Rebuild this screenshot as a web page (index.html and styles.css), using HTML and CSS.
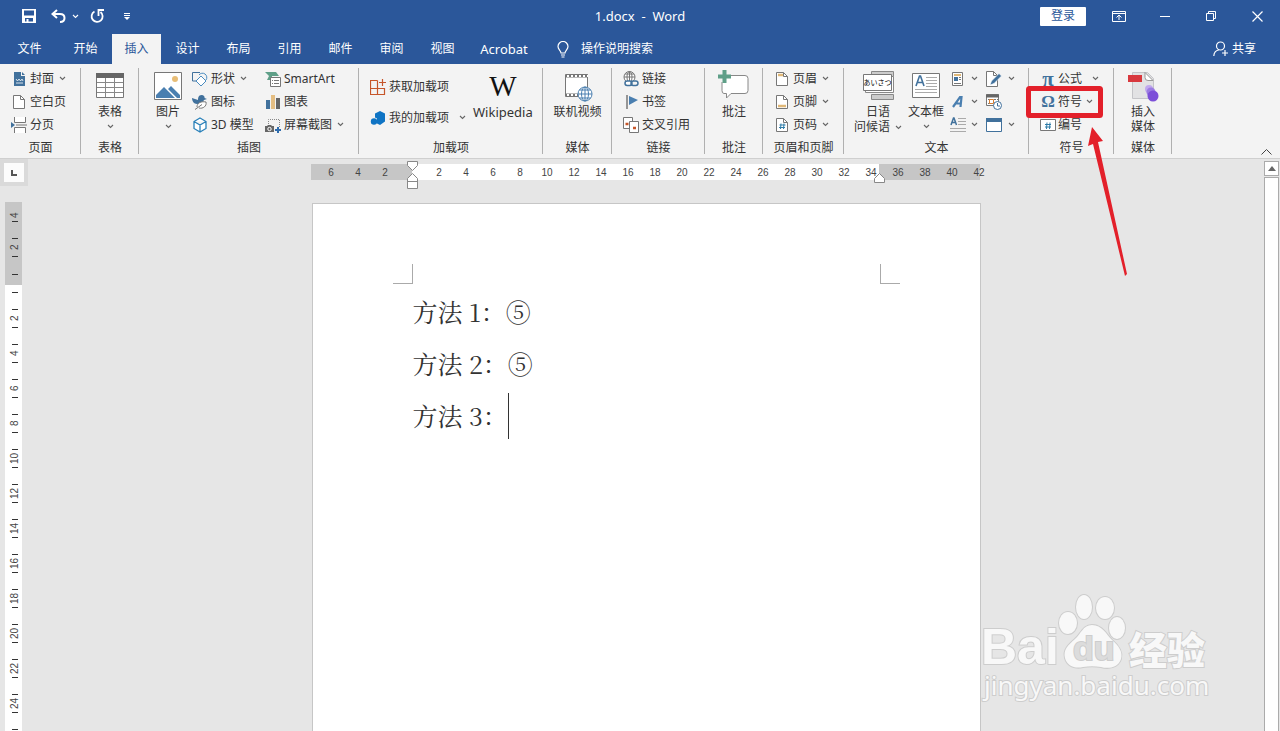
FILE: index.html
```html
<!DOCTYPE html>
<html lang="zh-CN">
<head>
    <meta charset="UTF-8">
    <title>1.docx - Word</title>
    <link rel="stylesheet" href="styles.css">
</head>
<body>
<svg class="sprite" aria-hidden="true">
    <symbol id="chev" viewBox="0 0 7 5"><path d="M1 1l2.5 2.5L6 1" fill="none" stroke="currentColor" stroke-width="1.1"/></symbol>
    <symbol id="sheet" viewBox="0 0 16 16"><path d="M2.500 1.500h7l4 4v9h-11z" fill="#fff" stroke="#777"/><path d="M9.500 1.500v4h4" fill="none" stroke="#777"/></symbol>
</svg>

<header class="titlebar">
    <div class="top-row">
        <div class="quick">
            <button class="q-save" aria-label="保存"><svg width="14" height="14" viewBox="0 0 14 14"><path d="M0 0h14v14H0zM2 1.500v5h10v-5zM3 9v3.500h1.500V10h2v2.500H11V9z" fill="#fff" fill-rule="evenodd"/></svg></button>
            <button class="q-undo" aria-label="撤销"><svg width="15" height="14" viewBox="0 0 15 14"><path d="M6 1L1.500 5 6 9M2 5h7c3 0 4.500 1.500 4.500 4S12 13 9 13" fill="none" stroke="#fff" stroke-width="2"/></svg></button>
            <button class="q-drop" aria-label="撤销列表"><svg width="7" height="5"><use href="#chev"/></svg></button>
            <button class="q-redo" aria-label="重复"><svg width="15" height="15" viewBox="0 0 15 15"><path d="M4.500 2.500A5.500 5.500 0 1 0 10.500 3" fill="none" stroke="#fff" stroke-width="1.800"/><path d="M14 1H8.500v6" fill="none" stroke="#fff" stroke-width="1.800"/></svg></button>
            <button class="q-more" aria-label="自定义"><svg width="6" height="7" viewBox="0 0 6 7"><path d="M0 .5h6M0 2.500h6" stroke="#fff"/><path d="M0 4h6L3 7z" fill="#fff"/></svg></button>
        </div>
        <h1 class="doc-title">1.docx  -  Word</h1>
        <div class="window">
            <button class="login">登录</button>
            <button class="win-btn" aria-label="功能区显示选项"><svg width="14" height="11" viewBox="0 0 14 11"><path d="M.5.500h13v10H.5zM.5 2.500h13M7 9V4M4.500 6.500L7 4l2.500 2.500" fill="none" stroke="#fff"/></svg></button>
            <button class="win-btn" aria-label="最小化"><svg width="10" height="10"><path d="M0 5.500h10" stroke="#fff"/></svg></button>
            <button class="win-btn" aria-label="还原"><svg width="10" height="10" viewBox="0 0 10 10"><path d="M.5 2.500h7v7h-7zM2.500 2.500v-2h7v7h-2" fill="none" stroke="#fff"/></svg></button>
            <button class="win-btn" aria-label="关闭"><svg width="11" height="11" viewBox="0 0 11 11"><path d="M.5.500l10 10M10.500.500l-10 10" stroke="#fff" stroke-width="1.200"/></svg></button>
        </div>
    </div>
    <nav class="tabs">
        <button class="tab file">文件</button>
        <button class="tab">开始</button>
        <button class="tab active">插入</button>
        <button class="tab">设计</button>
        <button class="tab">布局</button>
        <button class="tab">引用</button>
        <button class="tab">邮件</button>
        <button class="tab">审阅</button>
        <button class="tab">视图</button>
        <button class="tab acrobat">Acrobat</button>
        <label class="tell-me">
            <svg width="12" height="17" viewBox="0 0 12 17"><path d="M4 12C4 10 1 8.500 1 5.500a5 5 0 0 1 10 0C11 8.500 8 10 8 12zM4 14h4M4.500 16h3" fill="none" stroke="#fff" stroke-width="1.200"/></svg>
            <input type="text" aria-label="操作说明搜索" placeholder="操作说明搜索">
        </label>
        <button class="share">
            <svg width="16" height="16" viewBox="0 0 16 16"><circle cx="7.500" cy="5" r="4" fill="none" stroke="#fff" stroke-width="1.200"/><path d="M.8 15c.2-3.500 2-5.500 5-6M12 9v6M9 12h6" fill="none" stroke="#fff" stroke-width="1.200"/></svg>
            共享
        </button>
    </nav>
</header>

<section class="ribbon">
    <div class="group g-page">
        <div class="tools">
            <div class="col">
                <button class="small"><svg width="16" height="16" viewBox="0 0 16 16"><path d="M3 1h7v4h4v10H3z" fill="#41719c"/><path d="M11 1l3 3h-3z" fill="#41719c"/><path d="M5 8l1.500 2L8 8l1.500 2L11 8l1 2M5 12h7" fill="none" stroke="#fff" stroke-width=".8"/></svg>封面<svg class="chev"><use href="#chev"/></svg></button>
                <button class="small"><svg width="16" height="16"><use href="#sheet"/></svg>空白页</button>
                <button class="small"><svg width="16" height="16" viewBox="0 0 16 16"><path d="M3.500 0v5.500h11V0M3.500 16v-5.500h11V16" fill="#fff" stroke="#777"/><path d="M5 8h11" stroke="#777"/><path d="M0 5l4 3-4 3z" fill="#41719c"/></svg>分页</button>
            </div>
        </div>
        <div class="caption">页面</div>
    </div>

    <div class="group g-table">
        <div class="tools center">
            <button class="big"><svg width="32" height="32" viewBox="0 0 32 32"><path d="M2.500 3.500h27v24h-27z" fill="#fff" stroke="#777"/><path d="M2 3h28v5H2z" fill="#666"/><path d="M3 12.500h26M3 17.500h26M3 22.500h26M11.500 8v19M20.500 8v19" stroke="#888"/></svg><span>表格</span><svg class="chev"><use href="#chev"/></svg></button>
        </div>
        <div class="caption">表格</div>
    </div>

    <div class="group g-illus">
        <div class="tools">
            <button class="big pic"><svg width="32" height="32" viewBox="0 0 32 32"><path d="M2.500 2.500h27v27h-27z" fill="#fff" stroke="#777"/><circle cx="23" cy="9" r="3" fill="#e8bd76"/><path d="M4 28v-3l8-8 11 11zM16 19l3-3 9 9v3h-3z" fill="#4a7fb0"/></svg><span>图片</span><svg class="chev"><use href="#chev"/></svg></button>
            <div class="col shapes">
                <button class="small"><svg width="16" height="16" viewBox="0 0 16 16"><path d="M8 10H.5V1.500H8" fill="none" stroke="#41719c"/><path d="M7 4a4.300 4.300 0 1 1 7 5" fill="none" stroke="#4a8cc0"/><path d="M9 5l5 5-5 5-5-5z" fill="#fff" stroke="#4a8cc0"/></svg>形状<svg class="chev"><use href="#chev"/></svg></button>
                <button class="small"><svg width="16" height="16" viewBox="0 0 16 16"><path d="M0 4l6 2c0-2 .5-5 3.500-5C12 1 13 3 12.500 4L15 5l-3 1c-1 3-4 4-7 4C2 10 0 7 0 4z" fill="#41719c"/><path d="M5 13c0-4 4-6 9-5 1 4-3 7-7 6M3 15.500L10 10.500" fill="#fff" stroke="#777"/></svg>图标</button>
                <button class="small"><svg width="16" height="16" viewBox="0 0 16 16"><path d="M8 1l6 3.500v7L8 15l-6-3.500v-7zM2 4.500L8 8l6-3.500M8 8v7" fill="#fff" stroke="#2980b9" stroke-width="1.300"/></svg>3D 模型</button>
            </div>
            <div class="col smart">
                <button class="small"><svg width="16" height="16" viewBox="0 0 16 16"><path d="M0 1h11l3 4H7v4H2l2-4z" fill="#5f9f88"/><path d="M5.500 6.500h10v9h-10z" fill="#fff" stroke="#777"/><path d="M7 9.500h1m1 0h5M7 12.500h1m1 0h5" stroke="#777"/></svg>SmartArt</button>
                <button class="small"><svg width="16" height="16" viewBox="0 0 16 16"><path d="M1 6h4v9H1z" fill="#41719c"/><path d="M6 1h4v14H6z" fill="#e5be82"/><path d="M11 4h4v11h-4z" fill="#666"/></svg>图表</button>
                <button class="small"><svg width="16" height="16" viewBox="0 0 16 16"><path d="M3.500 7V2.500h11V10" fill="none" stroke="#888" stroke-dasharray="1 1"/><path d="M0 9h2l1-1h3l1 1h2v6H0z" fill="#666"/><circle cx="4.500" cy="12" r="1.700" fill="#666" stroke="#fff"/><path d="M13 10v6M10 13h6" stroke="#2f6cad" stroke-width="2"/></svg>屏幕截图<svg class="chev"><use href="#chev"/></svg></button>
            </div>
        </div>
        <div class="caption">插图</div>
    </div>

    <div class="group g-addin">
        <div class="tools">
            <div class="col tall">
                <button class="small"><svg width="16" height="16" viewBox="0 0 16 16"><path d="M7.500 1.500h-7v14h14v-6H.5M7.500 1.500v14M12.500 0v7M9 3.500h7" fill="none" stroke="#c6562a" stroke-width="1.200"/></svg>获取加载项</button>
                <button class="small mine"><svg width="16" height="16" viewBox="0 0 16 16"><path d="M10 1l5 2.500v8L10 15l-3-1.500V8.500L5 7.500v-4z" fill="#0f74c4"/><circle cx="4" cy="11.500" r="3.200" fill="#0f74c4"/></svg>我的加载项<svg class="chev"><use href="#chev"/></svg></button>
            </div>
            <button class="big wiki"><b class="wiki-w">W</b><span>Wikipedia</span></button>
        </div>
        <div class="caption">加载项</div>
    </div>

    <div class="group g-media">
        <div class="tools center">
            <button class="big"><svg width="32" height="32" viewBox="0 0 32 32"><path d="M4.500 4.500h22v22h-22z" fill="#fff" stroke="#777"/><path d="M5 6h22M5 25h13" stroke="#777" stroke-width="3"/><path d="M6 6h21M6 25h13" stroke="#fff" stroke-width="2" stroke-dasharray="2 2"/><circle cx="24" cy="24" r="7" fill="#fff" stroke="#4a7fb0"/><path d="M24 17v14M17 24h14M18.500 20h11M18.500 28h11" stroke="#4a7fb0"/><ellipse cx="24" cy="24" rx="3.500" ry="7" fill="none" stroke="#4a7fb0"/></svg><span>联机视频</span></button>
        </div>
        <div class="caption">媒体</div>
    </div>

    <div class="group g-links">
        <div class="tools">
            <div class="col">
                <button class="small"><svg width="16" height="16" viewBox="0 0 16 16"><circle cx="6.500" cy="6" r="5.500" fill="#fff" stroke="#777"/><path d="M1 6h11M6.500.500V11M2 3h9" stroke="#777"/><ellipse cx="6.500" cy="6" rx="2.500" ry="5.500" fill="none" stroke="#777"/><rect x="2" y="10" width="7" height="4.500" rx="2.200" fill="#fff" stroke="#41719c" stroke-width="1.500"/><rect x="8" y="10" width="7" height="4.500" rx="2.200" fill="none" stroke="#41719c" stroke-width="1.500"/></svg>链接</button>
                <button class="small"><svg width="16" height="16" viewBox="0 0 16 16"><path d="M4 1v14" stroke="#777" stroke-width="1.500"/><path d="M6 2l9 4-9 5z" fill="#4a7fb0"/></svg>书签</button>
                <button class="small"><svg width="16" height="16" viewBox="0 0 16 16"><path d="M.5.500h9v11h-9z" fill="#fff" stroke="#777"/><path d="M6.500 4.500h9v11h-9z" fill="#fff" stroke="#777"/><path d="M2.500 7h3M10 11h3" stroke="#c6562a" stroke-width="2.500"/></svg>交叉引用</button>
            </div>
        </div>
        <div class="caption">链接</div>
    </div>

    <div class="group g-comment">
        <div class="tools center">
            <button class="big"><svg width="32" height="32" viewBox="0 0 32 32"><path d="M7 5.500h20q3 0 3 3v12q0 3-3 3H13L8.500 28v-4.500H6q-2 0-2-3V12" fill="#fff" stroke="#888"/><path d="M6.500 0v13M0 6.500h13" stroke="#5f9f88" stroke-width="4"/></svg><span>批注</span></button>
        </div>
        <div class="caption">批注</div>
    </div>

    <div class="group g-header">
        <div class="tools">
            <div class="col">
                <button class="small"><svg width="16" height="16" viewBox="0 0 16 16"><use href="#sheet"/><path d="M4 4h5" stroke="#e0b878" stroke-width="2.500"/></svg>页眉<svg class="chev"><use href="#chev"/></svg></button>
                <button class="small"><svg width="16" height="16" viewBox="0 0 16 16"><use href="#sheet"/><path d="M4 12h8" stroke="#e0b878" stroke-width="2.500"/></svg>页脚<svg class="chev"><use href="#chev"/></svg></button>
                <button class="small"><svg width="16" height="16" viewBox="0 0 16 16"><use href="#sheet"/><path d="M7 6.500L6.500 12M10 6.500L9.500 12M5.500 8h6M5 10.500h6" stroke="#2f7ca8"/></svg>页码<svg class="chev"><use href="#chev"/></svg></button>
            </div>
        </div>
        <div class="caption">页眉和页脚</div>
    </div>

    <div class="group g-text">
        <div class="tools">
            <button class="big greet"><svg width="32" height="32" viewBox="0 0 32 32"><path d="M9.500 1.500h22v5h-22zM9.500 24.500h22v5h-22z" fill="#ccc" stroke="#888"/><path d="M3.500 6.500h28v16h-28z" fill="#fff" stroke="#888"/><path d="M1.500 4.500h28v16h-28z" fill="#fff" stroke="#777"/><text x="15.500" y="15" class="kana">あいさつ</text></svg><span>日语</span><span class="second">问候语<svg class="chev"><use href="#chev"/></svg></span></button>
            <button class="big textbox"><svg width="32" height="32" viewBox="0 0 32 32"><path d="M2.500 3.500h27v24h-27z" fill="#fff" stroke="#777"/><path d="M6 16l3.500-10h1L14 16M7.500 12.500h5" fill="none" stroke="#41719c" stroke-width="1.600"/><path d="M16 7.500h11M16 10.500h11M16 13.500h11M16 16.500h11M5 19.500h22M5 22.500h22" stroke="#aaa"/></svg><span>文本框</span><svg class="chev"><use href="#chev"/></svg></button>
            <div class="col icons">
                <button class="small" aria-label="文档部件"><svg width="16" height="16" viewBox="0 0 16 16"><path d="M2.500 1.500h10v13h-10z" fill="#fff" stroke="#777"/><path d="M4 4h7" stroke="#e0b878" stroke-width="2"/><path d="M4 6h4v4H4z" fill="#41719c"/><path d="M9 6.500h2M9 8.500h2M4 12.500h7" stroke="#777"/></svg><svg class="chev"><use href="#chev"/></svg></button>
                <button class="small" aria-label="艺术字"><svg width="16" height="16" viewBox="0 0 16 16"><path d="M3 13l7-10h1.500l-1 10M5 9.500h6" fill="none" stroke="#4a7fb0" stroke-width="2.200"/></svg><svg class="chev"><use href="#chev"/></svg></button>
                <button class="small" aria-label="首字下沉"><svg width="16" height="16" viewBox="0 0 16 16"><path d="M1 8l2.500-7h.5l2.500 7M2 5.500h4" fill="none" stroke="#41719c" stroke-width="1.500"/><path d="M8 1.500h8M8 4.500h8M8 7.500h8M0 11.500h16M0 14.500h16" stroke="#aaa"/></svg><svg class="chev"><use href="#chev"/></svg></button>
            </div>
            <div class="col icons last">
                <button class="small" aria-label="签名行"><svg width="16" height="16" viewBox="0 0 16 16"><path d="M.5.500h7l4 4v11H.5z" fill="#fff" stroke="#777"/><path d="M7.500.500v4h4" fill="none" stroke="#777"/><path d="M4 14l1.500-4L13 2.500l2.500 2.500L8 12.500z" fill="#41719c" stroke="#fff" stroke-width=".6"/></svg><svg class="chev"><use href="#chev"/></svg></button>
                <button class="small" aria-label="日期和时间"><svg width="16" height="16" viewBox="0 0 16 16"><path d="M.5.500h12v11H.5z" fill="#fff" stroke="#777"/><path d="M0 2h13" stroke="#666" stroke-width="3"/><path d="M2 5.500h10M2 9.500h8" stroke="#777" stroke-dasharray="2 1"/><path d="M3.500 5.500h4v4h-4z" fill="#fff" stroke="#d87e32"/><circle cx="11.500" cy="11.500" r="4" fill="#fff" stroke="#41719c"/><path d="M11.500 9v3H14" fill="none" stroke="#41719c"/></svg></button>
                <button class="small" aria-label="对象"><svg width="16" height="16" viewBox="0 0 16 16"><path d="M.5 1.500h15v13H.5z" fill="#fff" stroke="#41719c"/><path d="M0 1h16v4H0z" fill="#41719c"/></svg><svg class="chev"><use href="#chev"/></svg></button>
            </div>
        </div>
        <div class="caption">文本</div>
    </div>

    <div class="group g-symbol">
        <div class="tools">
            <div class="col">
                <button class="small formula"><b class="glyph pi">π</b>公式<svg class="chev"><use href="#chev"/></svg></button>
                <button class="small"><b class="glyph">Ω</b>符号<svg class="chev"><use href="#chev"/></svg></button>
                <button class="small"><svg width="16" height="16" viewBox="0 0 16 16"><path d="M.5 2.500h15v11H.5z" fill="#fff" stroke="#777"/><path d="M7 5.500L6.500 12M10 5.500L9.500 12M5 7.500h6M5 10h6" stroke="#2f7ca8"/></svg>编号</button>
            </div>
        </div>
        <div class="caption">符号</div>
        <svg class="pointer" width="104" height="192" viewBox="0 0 104 192" aria-hidden="true">
            <rect x="2.500" y="2.500" width="72" height="27" rx="1" fill="none" stroke="#e3202a" stroke-width="5"/>
            <path d="M66 41l11 14-5 1 29 132-2 2L67 58l-5 2z" fill="#e3202a"/>
        </svg>
    </div>

    <div class="group g-adobe">
        <div class="tools center">
            <button class="big"><svg width="32" height="32" viewBox="0 0 32 32"><path d="M5.500 2.500h15l6 6v20h-21z" fill="#e2e2e4" stroke="#c4c4c8"/><path d="M18 2.500l8 8h-5q-3 0-3-3z" fill="#fff" stroke="#999"/><path d="M1 5h14v7H1z" fill="#d8383e"/><circle cx="22" cy="19" r="4" fill="#c0a8ee"/><circle cx="24" cy="22" r="4.500" fill="#9b7be2"/><circle cx="26" cy="26" r="5.500" fill="#7c4fd8"/></svg><span>插入</span><span class="second">媒体</span></button>
        </div>
        <div class="caption">媒体</div>
    </div>

    <button class="collapse" aria-label="折叠功能区"><svg width="11" height="6" viewBox="0 0 11 6"><path d="M.5 5.500l5-5 5 5" fill="none" stroke="#444"/></svg></button>
</section>

<main class="workspace">
    <div class="left-rail">
        <button class="tab-stop" aria-label="制表符"><svg width="6" height="6"><path d="M1 0v5h5" fill="none" stroke="#555" stroke-width="2"/></svg></button>
        <div class="v-ruler">
            <div class="v-margin">
                <span class="v-cell cut">4</span>
                <span class="v-cell">2</span>
                <span class="v-cell half"></span>
            </div>
            <span class="v-cell half end"></span>
            <span class="v-cell">2</span>
            <span class="v-cell">4</span>
            <span class="v-cell">6</span>
            <span class="v-cell">8</span>
            <span class="v-cell">10</span>
            <span class="v-cell">12</span>
            <span class="v-cell">14</span>
            <span class="v-cell">16</span>
            <span class="v-cell">18</span>
            <span class="v-cell">20</span>
            <span class="v-cell">22</span>
            <span class="v-cell">24</span>
            <span class="v-cell"></span>
        </div>
    </div>

    <div class="canvas">
        <div class="h-ruler">
            <span>6</span><span>4</span><span>2</span><span></span><span>2</span><span>4</span><span>6</span><span>8</span><span>10</span><span>12</span><span>14</span><span>16</span><span>18</span><span>20</span><span>22</span><span>24</span><span>26</span><span>28</span><span>30</span><span>32</span><span>34</span><span>36</span><span>38</span><span>40</span><span>42</span>
            <svg class="indent left" width="12" height="28" viewBox="0 0 12 28"><path d="M.5.500h10v4l-5 5-5-5zM.5 27.500v-10l5-5 5 5v10zM.5 20.500h10" fill="#fff" stroke="#888"/></svg>
            <svg class="indent right" width="12" height="10" viewBox="0 0 12 10"><path d="M.5 9.500v-4l5-5 5 5v4z" fill="#fff" stroke="#888"/></svg>
        </div>
        <article class="page">
            <i class="crop crop-left"></i>
            <i class="crop crop-right"></i>
            <p>方法 1：⑤</p>
            <p>方法 2：⑤</p>
            <p>方法 3：<i class="caret"></i></p>
        </article>
    </div>

    <div class="scrollbar">
        <button class="up" aria-label="向上滚动"><svg width="8" height="5"><path d="M0 5l4-5 4 5z" fill="#666"/></svg></button>
        <div class="thumb"></div>
    </div>

    <svg class="watermark" width="232" height="112" viewBox="0 0 232 112">
        <g fill="#f8f8f8" stroke="#cdcdcd" stroke-width="2" paint-order="stroke">
            <text x="0" y="71" class="wm-bai">Bai</text>
            <ellipse cx="87" cy="30" rx="9" ry="11"/>
            <ellipse cx="103" cy="14" rx="8" ry="12"/>
            <ellipse cx="124" cy="15" rx="9" ry="11"/>
            <ellipse cx="136" cy="35" rx="8" ry="11"/>
            <path d="M111 32c10 0 14 9 20 15 7 6 11 12 9 19-3 9-13 10-20 8-6-1-12-1-18 0-8 2-16-1-18-9-2-8 3-13 10-19 6-5 8-14 17-14z"/>
            <text x="92" y="67" class="wm-du">du</text>
            <text x="148" y="71" class="wm-jy">经验</text>
            <text x="3" y="102" class="wm-url">jingyan.baidu.com</text>
        </g>
    </svg>
</main>
</body>
</html>
```
FILE: styles.css
```css
* {
    box-sizing: border-box;
}

body {
    margin: 0;
    height: 100vh;
    display: flex;
    flex-direction: column;
    overflow: hidden;
    font: 12px/18px "Noto Sans", "Noto Sans CJK SC", sans-serif;
    color: #333;
    background: #e6e6e6;
}

button {
    border: 0;
    padding: 0;
    background: none;
    font: inherit;
    color: inherit;
    white-space: nowrap;
}

svg {
    flex: none;
    display: block;
}

.sprite {
    position: absolute;
    width: 0;
    height: 0;
}

.chev {
    width: 7px;
    height: 5px;
    color: #666;
}

/* title bar */
.titlebar {
    background: #2b579a;
    color: #fff;
}

.top-row {
    display: grid;
    grid-template-columns: 1fr auto 1fr;
    align-items: center;
    height: 32px;
}

.quick {
    display: flex;
    align-items: center;
    padding-left: 22px;
}

.q-undo {
    margin-left: 15px;
}

.q-drop {
    margin-left: 6px;
}

.q-redo {
    margin-left: 11px;
}

.q-more {
    margin-left: 19px;
}

.doc-title {
    margin: 0;
    font-size: 13px;
    font-weight: normal;
    white-space: pre;
}

.window {
    display: flex;
    align-items: center;
    justify-content: flex-end;
}

.login {
    width: 46px;
    height: 19px;
    margin-right: 10px;
    background: #fff;
    color: #2b579a;
    border-radius: 1px;
}

.win-btn {
    width: 46px;
    height: 32px;
    display: flex;
    align-items: center;
    justify-content: center;
}

.tabs {
    display: flex;
    gap: 2px;
    height: 32px;
    padding-top: 2px;
}

.tab {
    width: 49px;
}

.tab.file {
    width: 59px;
}

.tab.acrobat {
    width: 70px;
    font-size: 13px;
}

.tab.active {
    background: #f3f3f3;
    color: #2b579a;
}

.tell-me {
    display: flex;
    align-items: center;
    gap: 12px;
    margin-left: 16px;
}

.tell-me input {
    width: 100px;
    border: 0;
    padding: 0;
    background: none;
    color: #fff;
    font: inherit;
}

.tell-me input::placeholder {
    color: #fff;
    opacity: 1;
}

.share {
    display: flex;
    align-items: center;
    gap: 3px;
    margin-left: auto;
    padding-right: 24px;
}

/* ribbon */
.ribbon {
    display: flex;
    height: 95px;
    background: #f3f3f3;
    border-bottom: 1px solid #cfcfcf;
}

.group {
    position: relative;
    display: flex;
    flex-direction: column;
    flex: none;
    padding-top: 3px;
}

.group::after {
    content: "";
    position: absolute;
    right: 0;
    top: 4px;
    bottom: 4px;
    border-right: 1px solid #b0b0b0;
}

.tools {
    display: flex;
    flex: none;
    height: 69px;
}

.tools.center {
    justify-content: center;
}

.caption {
    line-height: 24px;
    text-align: center;
}

.col {
    display: flex;
    flex-direction: column;
}

.small {
    display: flex;
    align-items: center;
    gap: 3px;
    height: 23px;
}

.small .chev {
    margin-left: 2px;
}

.big {
    display: flex;
    flex-direction: column;
    align-items: center;
    padding-top: 3px;
}

.big > span {
    line-height: 20px;
}

.big .chev {
    margin-top: 2px;
}

.big > .second {
    display: flex;
    align-items: center;
    gap: 5px;
    line-height: 10px;
}

.second .chev {
    margin-top: 0;
}

.g-page {
    width: 81px;
    padding-left: 11px;
}

.g-page .caption {
    margin-left: -11px;
}

.g-table, .g-comment, .g-adobe {
    width: 58px;
}

.g-illus {
    width: 220px;
}

.pic {
    margin-left: 13px;
}

.shapes {
    width: 73px;
    margin-left: 8px;
}

.g-addin {
    width: 184px;
}

.tall {
    width: 98px;
    margin-left: 11px;
    padding-top: 4px;
}

.tall .small {
    height: 31px;
}

.mine .chev {
    margin-left: 7px;
}

.wiki {
    margin-left: 5px;
    font-size: 13px;
}

.wiki-w {
    height: 32px;
    font: 29px/32px "Liberation Serif", serif;
    color: #111;
}

.g-media {
    width: 69px;
}

.g-links {
    width: 93px;
}

.g-links .col, .g-header .col, .g-symbol .col {
    margin-left: 11px;
}

.g-header {
    width: 81px;
}

.g-text {
    width: 185px;
}

.greet {
    margin-left: 10px;
}

.textbox {
    margin-left: 6px;
}

.kana {
    font: 7px "Noto Sans CJK JP", sans-serif;
    text-anchor: middle;
}

.icons {
    width: 36px;
    margin-left: 6px;
}

.icons.last {
    margin-left: 0;
}

.icons.last .small {
    gap: 4px;
}

.g-symbol {
    width: 85px;
    z-index: 2;
}

.g-symbol .small {
    gap: 2px;
}

.formula .chev {
    margin-left: 8px;
}

.glyph {
    width: 16px;
    font: bold 17px/20px "Liberation Serif", serif;
    color: #41719c;
    text-align: center;
}

.glyph.pi {
    font-size: 21px;
}

.pointer {
    position: absolute;
    left: -3px;
    top: 22px;
    z-index: 1;
    pointer-events: none;
}

.collapse {
    align-self: flex-end;
    margin-left: auto;
    padding: 0 8px 3px;
}

/* document area */
.workspace {
    position: relative;
    flex: 1;
    min-height: 0;
    display: flex;
    overflow: hidden;
}

.left-rail {
    width: 28px;
    display: flex;
    flex-direction: column;
}

.tab-stop {
    height: 27px;
    flex: none;
    display: flex;
    align-items: center;
    justify-content: center;
    background: #fcfcfc;
    border: 4px solid #dadada;
}

.v-ruler {
    flex: 1;
    min-height: 0;
    width: 17px;
    margin: 16px 0 0 5px;
    overflow: hidden;
    background: #fff;
}

.v-margin {
    background: #c6c6c6;
    height: 83px;
}

.v-cell {
    display: flex;
    align-items: center;
    justify-content: space-between;
    width: 20px;
    height: 35px;
    padding: 8px 0;
    writing-mode: vertical-rl;
    transform: rotate(180deg);
    font: 10px/16px "Liberation Sans", sans-serif;
    color: #444;
}

.v-cell::before, .v-cell::after {
    content: "";
    width: 6px;
    height: 1px;
    background: #333;
}

.v-cell.cut {
    height: 28px;
    padding-bottom: 6px;
}

.v-cell.cut::after {
    visibility: hidden;
}

.v-cell.half {
    height: 20px;
    padding: 10px 0 0;
}

.v-cell.half::before {
    display: none;
}

.v-cell.half.end {
    height: 16px;
    padding: 8px 0 0;
}

.canvas {
    flex: 1;
    display: flex;
    flex-direction: column;
    align-items: center;
}

.h-ruler {
    position: relative;
    display: flex;
    flex: none;
    width: 669px;
    height: 16px;
    margin: 5px 2px 0 0;
    padding-left: 7px;
    background: linear-gradient(to right, #c6c6c6 101px, #fff 101px, #fff 568px, #c6c6c6 568px);
    font: 10px/17px "Liberation Sans", sans-serif;
    color: #444;
}

.h-ruler span {
    flex: 0 0 27px;
    text-align: center;
}

.indent {
    position: absolute;
}

.indent.left {
    left: 96px;
    top: -3px;
}

.indent.right {
    left: 563px;
    top: 9px;
}

.page {
    position: relative;
    flex: 1;
    width: 669px;
    margin-top: 23px;
    padding: 81px 100px 0;
    background: #fff;
    border: 1px solid #c6c6c6;
    border-bottom: 0;
    font: 25px/52px "Noto Serif CJK SC", "Noto Sans CJK SC", serif;
}

.page p {
    margin: 0;
    height: 52px;
}

.crop {
    position: absolute;
    top: 60px;
    width: 20px;
    height: 20px;
    border-bottom: 1px solid #aaa;
}

.crop-left {
    left: 80px;
    border-right: 1px solid #aaa;
}

.crop-right {
    right: 80px;
    border-left: 1px solid #aaa;
}

.caret {
    display: inline-block;
    height: 46px;
    margin-top: 4px;
    border-left: 1px solid #333;
    vertical-align: top;
}

.scrollbar {
    width: 16px;
    display: flex;
    flex-direction: column;
    gap: 1px;
    padding: 2px 1px 0 0;
}

.up {
    height: 15px;
    display: flex;
    align-items: center;
    justify-content: center;
    background: #fff;
    border: 1px solid #ababab;
}

.thumb {
    flex: 1;
    background: #fff;
    border: 1px solid #ababab;
    border-bottom: 0;
}

.watermark {
    position: absolute;
    right: 67px;
    bottom: 26px;
}

.wm-bai {
    font: bold 50px "Liberation Sans", sans-serif;
}

.wm-du {
    font: bold 34px "Liberation Sans", sans-serif;
    fill: #dcdcdc;
}

.wm-jy {
    font: 900 38px "Noto Sans CJK SC", sans-serif;
}

.wm-url {
    font: 26px "Noto Sans", sans-serif;
}
```
